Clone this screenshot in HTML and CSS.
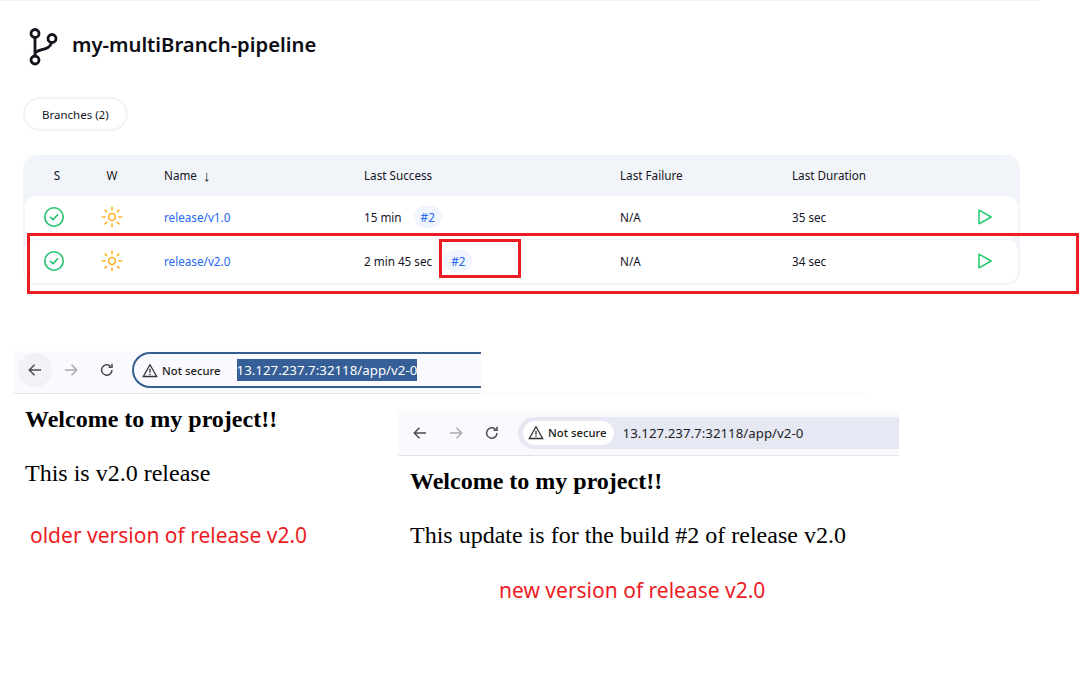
FILE: index.html
```html
<!DOCTYPE html>
<html lang="en">

<head>
    <meta charset="UTF-8">
    <meta name="viewport" content="width=device-width, initial-scale=1.0">
    <title>my-multiBranch-pipeline</title>
    <link rel="stylesheet" href="styles.css">
</head>

<body>
    <div class="page">
        <div class="top-line"></div>

        <!-- jenkins part -->
        <div class="jenkins">
            <div class="job-title">
                <svg class="branch-icon" width="30" height="40" viewBox="0 0 30 40">
                    <g fill="none" stroke="#14141c" stroke-width="2.8" stroke-linecap="round">
                        <circle cx="7" cy="6.5" r="4"></circle>
                        <circle cx="7" cy="33" r="4"></circle>
                        <circle cx="24" cy="11.5" r="4"></circle>
                        <path d="M7 10.5V29"></path>
                        <path d="M7.5 25.5C11 21.5 22 23.5 23.5 15.5"></path>
                    </g>
                </svg>
                <h1>my-multiBranch-pipeline</h1>
            </div>

            <div class="tabs">
                <span class="tab">Branches (2)</span>
            </div>

            <div class="runs">
                <div class="row head">
                    <div class="cell center">S</div>
                    <div class="cell center">W</div>
                    <div class="cell name">Name <span class="sort">↓</span></div>
                    <div class="cell">Last Success</div>
                    <div class="cell">Last Failure</div>
                    <div class="cell">Last Duration</div>
                    <div class="cell"></div>
                </div>

                <div class="row item">
                    <div class="cell center">
                        <svg class="status" width="22" height="22" viewBox="0 0 22 22">
                            <circle cx="11" cy="11" r="9.2" fill="none" stroke="#1fc16b" stroke-width="1.6"></circle>
                            <path d="M7.5 11.3l2.5 2.5 4.6-5" fill="none" stroke="#1fc16b" stroke-width="1.6" stroke-linecap="round" stroke-linejoin="round"></path>
                        </svg>
                    </div>
                    <div class="cell center">
                        <svg width="22" height="22" viewBox="0 0 22 22">
                            <circle cx="11" cy="11" r="3.4" fill="none" stroke="#ffae1c" stroke-width="1.5"></circle>
                            <path d="M11 1.3V4M11 18v2.7M1.3 11H4M18 11h2.7M4.1 4.1l1.7 1.700M16.200 16.200l1.700 1.700M4.100 17.900l1.700-1.700M16.200 5.800l1.700-1.700" fill="none" stroke="#ffae1c" stroke-width="1.5" stroke-linecap="round"></path>
                        </svg>
                    </div>
                    <div class="cell name"><a href="#">release/v1.0</a></div>
                    <div class="cell">15 min <span class="badge">#2</span></div>
                    <div class="cell">N/A</div>
                    <div class="cell">35 sec</div>
                    <div class="cell">
                        <svg width="16" height="18" viewBox="0 0 16 18">
                            <path d="M2 2.2v13.6L14.2 9z" fill="none" stroke="#1fc96b" stroke-width="1.5" stroke-linejoin="round"></path>
                        </svg>
                    </div>
                </div>

                <div class="row item">
                    <div class="cell center">
                        <svg class="status" width="22" height="22" viewBox="0 0 22 22">
                            <circle cx="11" cy="11" r="9.2" fill="none" stroke="#1fc16b" stroke-width="1.6"></circle>
                            <path d="M7.5 11.3l2.5 2.5 4.6-5" fill="none" stroke="#1fc16b" stroke-width="1.6" stroke-linecap="round" stroke-linejoin="round"></path>
                        </svg>
                    </div>
                    <div class="cell center">
                        <svg width="22" height="22" viewBox="0 0 22 22">
                            <circle cx="11" cy="11" r="3.4" fill="none" stroke="#ffae1c" stroke-width="1.5"></circle>
                            <path d="M11 1.3V4M11 18v2.7M1.3 11H4M18 11h2.7M4.1 4.1l1.7 1.700M16.200 16.200l1.700 1.700M4.100 17.900l1.700-1.700M16.200 5.800l1.700-1.700" fill="none" stroke="#ffae1c" stroke-width="1.5" stroke-linecap="round"></path>
                        </svg>
                    </div>
                    <div class="cell name"><a href="#">release/v2.0</a></div>
                    <div class="cell">2 min 45 sec <span class="badge">#2</span></div>
                    <div class="cell">N/A</div>
                    <div class="cell">34 sec</div>
                    <div class="cell">
                        <svg width="16" height="18" viewBox="0 0 16 18">
                            <path d="M2 2.2v13.6L14.2 9z" fill="none" stroke="#1fc96b" stroke-width="1.5" stroke-linejoin="round"></path>
                        </svg>
                    </div>
                </div>
            </div>
        </div>

        <!-- red marks drawn over the table -->
        <div class="mark mark-row"></div>
        <div class="mark mark-build"></div>

        <!-- faint edge left from the cropped screenshot -->
        <div class="crop-edge"></div>

        <!-- old version window -->
        <div class="shot shot-old">
            <div class="toolbar">
                <span class="nav-btn active">
                    <svg width="16" height="16" viewBox="0 0 16 16"><path d="M14 8H2.5M7.5 2.8L2.3 8l5.2 5.2" fill="none" stroke="#4a4c52" stroke-width="1.5"></path></svg>
                </span>
                <span class="nav-btn">
                    <svg width="16" height="16" viewBox="0 0 16 16"><path d="M2 8h11.5M8.5 2.8L13.7 8l-5.2 5.2" fill="none" stroke="#a9abb0" stroke-width="1.5"></path></svg>
                </span>
                <span class="nav-btn">
                    <svg width="16" height="16" viewBox="0 0 16 16"><path d="M13 8a5.2 5.2 0 1 1-1.5-3.7M13 1.8v3.4H9.6" fill="none" stroke="#4a4c52" stroke-width="1.5"></path></svg>
                </span>
                <div class="omnibox focused">
                    <span class="secure">
                        <svg width="16" height="15" viewBox="0 0 16 15"><path d="M8 1.7L14.7 13.5H1.3zM8 5.800v3.900M8 10.700v1.300" fill="none" stroke="#303236" stroke-width="1.3"></path></svg>
                        Not secure
                    </span>
                    <span class="url selected">13.127.237.7:32118/app/v2-0</span>
                </div>
            </div>
            <div class="content">
                <h3>Welcome to my project!!</h3>
                <p>This is v2.0 release</p>
            </div>
            <div class="note">older version of release v2.0</div>
        </div>

        <!-- new version window -->
        <div class="shot shot-new">
            <div class="toolbar">
                <span class="nav-btn">
                    <svg width="16" height="16" viewBox="0 0 16 16"><path d="M14 8H2.5M7.5 2.8L2.3 8l5.2 5.2" fill="none" stroke="#4a4c52" stroke-width="1.5"></path></svg>
                </span>
                <span class="nav-btn">
                    <svg width="16" height="16" viewBox="0 0 16 16"><path d="M2 8h11.5M8.5 2.8L13.7 8l-5.2 5.2" fill="none" stroke="#a9abb0" stroke-width="1.5"></path></svg>
                </span>
                <span class="nav-btn">
                    <svg width="16" height="16" viewBox="0 0 16 16"><path d="M13 8a5.2 5.2 0 1 1-1.5-3.700M13 1.800v3.400H9.600" fill="none" stroke="#4a4c52" stroke-width="1.5"></path></svg>
                </span>
                <div class="omnibox">
                    <span class="secure">
                        <svg width="16" height="15" viewBox="0 0 16 15"><path d="M8 1.7L14.7 13.500H1.300zM8 5.800v3.900M8 10.700v1.300" fill="none" stroke="#303236" stroke-width="1.3"></path></svg>
                        Not secure
                    </span>
                    <span class="url">13.127.237.7:32118/app/v2-0</span>
                </div>
            </div>
            <div class="content">
                <h3>Welcome to my project!!</h3>
                <p>This update is for the build #2 of release v2.0</p>
            </div>
            <div class="note">new version of release v2.0</div>
        </div>
    </div>
</body>

</html>
```

FILE: styles.css
```css
body {
    margin: 0;
    background-color: #fff;
    color: #14141f;
    font-family: "Noto Sans", "Liberation Sans", sans-serif;
}

.page {
    position: relative;
    width: 1086px;
    height: 678px;
    overflow: hidden;
}

.top-line {
    width: 1040px;
    height: 1px;
    background-color: #f3f3f5;
}

.jenkins {
    padding: 26px 0 0 23px;
    width: 997px;
}

.job-title {
    display: flex;
    align-items: center;
    gap: 14px;
    padding-left: 5px;
    height: 40px;
}

.job-title h1 {
    margin: 0 0 6px;
    font-size: 20.25px;
    font-weight: 600;
    color: #0c0c14;
}

.tabs {
    display: flex;
    margin-top: 30px;
}

.tab {
    border: 2px solid #f0f3f7;
    border-radius: 17px;
    padding: 0 17px;
    height: 30px;
    line-height: 31px;
    font-size: 11.5px;
    color: #14141f;
}

.runs {
    margin-top: 24px;
    border: 2px solid #f1f4f8;
    border-radius: 14px;
    background-color: #f1f4f8;
}

.row {
    display: grid;
    grid-template-columns: 64px 46px 229px 256px 172px 185px 1fr;
    align-items: center;
    font-size: 11.7px;
}

.head {
    height: 39px;
    padding-bottom: 3px;
    box-sizing: border-box;
}

.item {
    height: 43px;
    padding-bottom: 1px;
    box-sizing: border-box;
    background-color: #fff;
    border-radius: 11px;
    margin-bottom: 1px;
}

.item:last-child {
    margin-bottom: 0;
}

.cell {
    display: flex;
    align-items: center;
}

.center {
    justify-content: center;
}

.status {
    margin-right: 6px;
}

.name {
    padding-left: 29px;
}

.name a {
    color: #2468f2;
    text-decoration: none;
}

.sort {
    margin-left: 6px;
    font-size: 15px;
    line-height: 1;
}

.badge {
    display: inline-block;
    background-color: #f0f5fe;
    color: #2468f2;
    border-radius: 11px;
    padding: 0 7px;
    height: 22px;
    line-height: 22px;
    margin-left: 12px;
}

.mark {
    position: absolute;
    border: 3px solid #ed1c24;
}

.mark-row {
    left: 27px;
    top: 233px;
    width: 1046px;
    height: 55px;
}

.mark-build {
    left: 439px;
    top: 239px;
    width: 76px;
    height: 33px;
}

.crop-edge {
    position: absolute;
    left: 372px;
    top: 393px;
    width: 498px;
    height: 1px;
    background-color: #f8f8fc;
}

.shot {
    position: absolute;
}

.shot-old {
    left: 13px;
    top: 351px;
    width: 468px;
}

.shot-new {
    left: 398px;
    top: 412px;
    width: 501px;
}

.toolbar {
    display: flex;
    align-items: center;
    background-color: #f9f9fe;
    border-bottom: 1px solid #e4e4ec;
}

.shot-old .toolbar {
    height: 42px;
    padding-left: 5px;
}

.shot-new .toolbar {
    height: 43px;
    padding-left: 5px;
}

.nav-btn {
    display: flex;
    align-items: center;
    justify-content: center;
    flex: none;
    width: 34px;
    height: 34px;
    margin-right: 2px;
    border-radius: 50%;
}

.nav-btn.active {
    background-color: #f1f1f6;
}

.shot-old .nav-btn {
    margin-top: -4px;
}

.shot-new .nav-btn {
    margin-top: -2px;
}

.omnibox {
    display: flex;
    align-items: center;
    flex: 1;
    min-width: 0;
    box-sizing: border-box;
    font-size: 12.5px;
    white-space: nowrap;
}

.shot-old .omnibox {
    align-self: flex-start;
    margin: 1px 0 0 6px;
    height: 36px;
    border: 2px solid #35608f;
    border-right: none;
    border-radius: 18px 0 0 18px;
    padding-left: 8px;
}

.shot-new .omnibox {
    margin: -2px 0 0 7px;
    height: 32px;
    background-color: #e6e8f3;
    border-radius: 16px 0 0 16px;
    padding-left: 5px;
    color: #1f1f24;
}

.secure {
    display: flex;
    align-items: center;
    gap: 4px;
    font-size: 11.3px;
    font-weight: 500;
    color: #1c1c20;
}

.shot-new .secure {
    background-color: #fff;
    border-radius: 13px;
    height: 24px;
    padding: 0 7px 0 5px;
}

.url {
    margin-left: 16px;
    font-size: 13.3px;
}

.shot-new .url {
    margin-left: 9px;
}

.selected {
    background-color: #355f96;
    color: #fff;
    height: 22px;
    line-height: 22px;
}

.content {
    font-family: "Liberation Serif", serif;
    color: #000;
    font-size: 24px;
}

.shot-old .content {
    padding: 12px 0 0 12px;
}

.shot-new .content {
    padding: 12px 0 0 12px;
}

.content h3 {
    margin: 0;
    font-size: inherit;
}

.content p {
    margin: 27px 0 0;
}

.note {
    color: #ed1c24;
    font-size: 21px;
}

.shot-old .note {
    margin: 34px 0 0 17px;
}

.shot-new .note {
    margin: 27px 0 0 101px;
}
```
